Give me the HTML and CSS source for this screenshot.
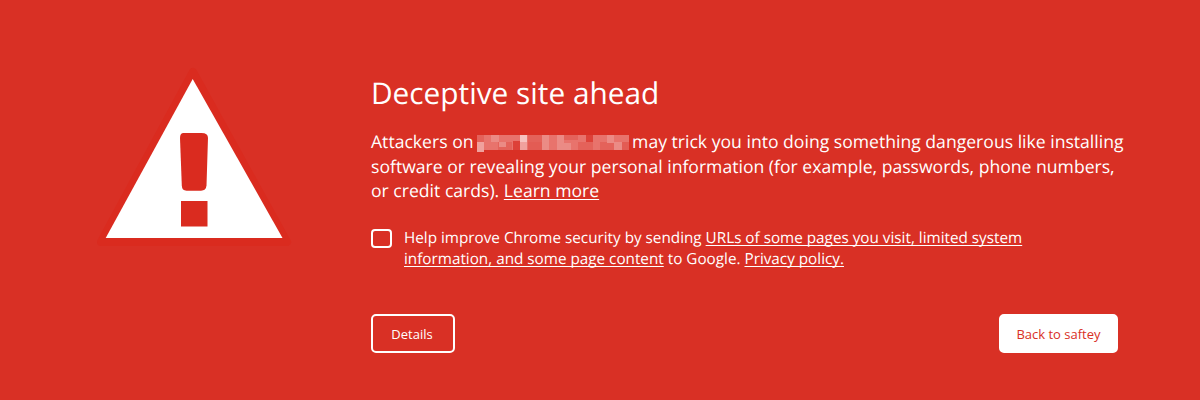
FILE: index.html
```
<!DOCTYPE html>
<html lang="en">
<head>
<meta charset="utf-8">
<title>Deceptive site ahead</title>
<link rel="stylesheet" href="styles.css">
</head>
<body>
<main class="warning">
  <svg class="warning-icon" viewBox="0 0 196 180" aria-hidden="true">
    <path d="M96 5 L190 175 H4Z" fill="#da2b1f" stroke="#da2b1f" stroke-width="8" stroke-linejoin="round"/>
    <path d="M95.700 12 L185.500 171 H8.700Z" fill="#fff"/>
    <path d="M86.500 66 H104.500 Q111 66 111 71 L109.500 118.500 Q109 123.700 104 123.700 H89.500 Q85 123.700 84.800 118.500 L83 71 Q83 66 86.500 66Z" fill="#da2b1f"/>
    <rect x="84" y="134" width="26.500" height="25.500" fill="#da2b1f"/>
  </svg>
  <section class="content">
    <h1 class="title">Deceptive site ahead</h1>
    <p class="message">Attackers on <svg class="redacted" viewBox="0 0 152 17" shape-rendering="crispEdges" aria-hidden="true">
      <rect width="152" height="15" fill="#e8736c"/>
      <path d="M0 0h7v7h-7zM21 7h14v8h-14zM51 0h15v7h-15zM87 0h14v5h-14zM101 7h15v8h-15zM123 7h14v8h-14z" fill="#e4625a"/>
      <path d="M36 6h7v9h-7zM109 0h7v7h-7z" fill="#dd4138"/>
      <path d="M14 0h8v7h-8zM22 7h7v5h-7zM65 0h7v15h-7zM80 0h7v8h-7zM80 8h14v7h-14zM130 0h7v8h-7zM137 7h8v8h-8z" fill="#eb8b85"/>
      <path d="M0 7h7v10h-7zM43 7h7v8h-7z" fill="#f0a19d"/>
      <path d="M43 0h7v7h-7z" fill="#f6c3c0"/>
      <path d="M51 7h14v8h-14zM145 7h7v8h-7z" fill="#e35c54"/>
    </svg>may trick you into doing something dangerous like installing<br>software or revealing your personal information (for example, passwords, phone numbers,<br>or credit cards). <a class="link">Learn more</a></p>
    <div class="option">
      <span class="checkbox" role="checkbox" aria-checked="false"></span>
      <p class="option-text">Help improve Chrome security by sending <a class="link">URLs of some pages you visit, limited system<br>information, and some page content</a> to Google. <a class="link">Privacy policy.</a></p>
    </div>
    <div class="actions">
      <button class="button button-outline">Details</button>
      <button class="button button-solid">Back to saftey</button>
    </div>
  </section>
</main>
</body>
</html>
```
FILE: styles.css
```
* { box-sizing: border-box; }
body {
  margin: 0;
  background: #d93025;
  color: #fff;
  font-family: "Open Sans", sans-serif;
  text-rendering: geometricPrecision;
}
.warning {
  display: flex;
  align-items: flex-start;
  height: 400px;
  padding: 67px 82px 0 97px;
}
.warning-icon { width: 196px; height: 180px; flex: none; }
.content { width: 747px; margin-left: 78px; }
.title {
  margin: 6px 0 0;
  font-size: 29.800px;
  line-height: 40px;
  font-weight: 400;
}
.message {
  margin: 17px 0 0;
  font-size: 17.600px;
  line-height: 24.500px;
  white-space: nowrap;
}
.redacted { width: 152px; height: 17px; margin: 0 3px 0 -1px; vertical-align: -4px; }
.link {
  text-decoration: underline;
  text-decoration-skip-ink: none;
  text-underline-offset: 2px;
  text-decoration-thickness: 1px;
}
.option { display: flex; margin-top: 23px; }
.checkbox {
  width: 21px;
  height: 19px;
  margin-top: 2px;
  border: 2px solid #fff;
  border-radius: 4px;
  flex: none;
}
.option-text {
  margin: 1px 0 0 12px;
  font-size: 15.270px;
  line-height: 21.600px;
  white-space: nowrap;
}
.actions { display: flex; justify-content: space-between; margin-top: 43.500px; }
.button {
  height: 39px;
  border: 2px solid #fff;
  border-radius: 5px;
  padding: 1px 0 0;
  font-family: inherit;
  font-size: 13px;
}
.button-outline { width: 84px; padding-right: 2px; background: transparent; color: #fff; }
.button-solid { width: 119px; background: #fff; color: #d93025; }
```
